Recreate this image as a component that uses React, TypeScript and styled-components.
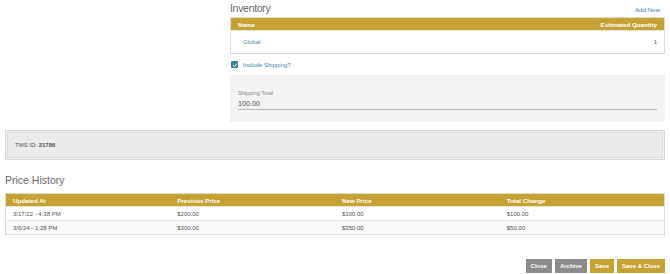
import styled, { createGlobalStyle } from "styled-components";

const GlobalStyle = createGlobalStyle`
  body {
    margin: 0;
    background: #ffffff;
    font-family: "Liberation Sans", Arial, sans-serif;
    color: #555;
  }
`;

const GOLD = "#c4a332";
const LINK = "#3f86b1";

const Page = styled.div`
  width: 670px;
  padding: 0 5px;
  box-sizing: border-box;
`;

const TopGrid = styled.div`
  display: grid;
  grid-template-columns: 225px 1fr;
`;

const InventoryColumn = styled.div`
  display: flex;
  flex-direction: column;
`;

const TitleBar = styled.div`
  display: flex;
  justify-content: space-between;
  align-items: flex-end;
  height: 17px;
  padding-bottom: 3px;
  box-sizing: border-box;
`;

const SectionTitle = styled.div`
  font-size: 10.5px;
  line-height: 12px;
  color: #6a6a6a;
  letter-spacing: -0.3px;
`;

const LinkText = styled.a`
  font-size: 6.2px;
  color: ${LINK};
  text-decoration: none;
  padding-right: 5px;
  line-height: 8px;
`;

const Table = styled.table`
  width: 100%;
  border-collapse: collapse;
  table-layout: fixed;
  border: 1px solid #dcdcdc;
`;

const Th = styled.th<{ $align?: string }>`
  background: ${GOLD};
  color: #fff;
  font-size: 6.2px;
  font-weight: bold;
  text-align: ${(p) => p.$align ?? "left"};
  height: 12px;
  padding: 0 7px;
`;

const Td = styled.td<{ $align?: string; $height?: number }>`
  font-size: 6px;
  color: #555;
  text-align: ${(p) => p.$align ?? "left"};
  height: ${(p) => p.$height ?? 13}px;
  padding: 0 7px;
  border-top: 1px solid #e6e6e6;
`;

const Row = styled.tr<{ $striped?: boolean }>`
  background: ${(p) => (p.$striped ? "#f9f9f9" : "#ffffff")};
`;

const LinkCell = styled(Td)`
  color: ${LINK};
  padding-left: 12px;
`;

const CheckRow = styled.label`
  display: flex;
  align-items: center;
  gap: 5px;
  height: 21px;
  padding-left: 1px;
  font-size: 6px;
  color: ${LINK};
`;

const CheckBox = styled.span`
  width: 7px;
  height: 7px;
  background: #3b7fa2;
  border-radius: 1px;
  display: flex;
  align-items: center;
  justify-content: center;
`;

const ShippingPanel = styled.div`
  background: #f3f3f3;
  padding: 14px 8px 12px;
  display: flex;
  flex-direction: column;
`;

const FieldLabel = styled.div`
  font-size: 5.6px;
  line-height: 8px;
  color: #888;
`;

const FieldValue = styled.div`
  font-size: 7.2px;
  line-height: 10px;
  margin-top: 2px;
  color: #555;
  border-bottom: 1px solid #b8b8b8;
`;

const InfoBox = styled.div`
  margin-top: 8px;
  height: 30px;
  box-sizing: border-box;
  background: #ebebeb;
  border: 1px solid #d8d8d8;
  box-shadow: inset 0 0 0 1px #f4f4f4, inset 0 0 0 2px #dedede;
  display: flex;
  align-items: center;
  padding-left: 9px;
  font-size: 6px;
  color: #555;
`;

const HistoryTitle = styled(SectionTitle)`
  margin: 12px 0 4px;
  line-height: 17px;
  letter-spacing: 0;
`;

const ButtonBar = styled.div`
  display: flex;
  justify-content: flex-end;
  gap: 3px;
  margin-top: 24px;
`;

const Button = styled.button<{ $primary?: boolean }>`
  height: 14px;
  border: none;
  padding: 0 5px;
  background: ${(p) => (p.$primary ? GOLD : "#8c8c8c")};
  color: #fff;
  font-family: "Liberation Sans", Arial, sans-serif;
  font-size: 6px;
  font-weight: bold;
`;

const history = [
  { at: "3/17/22 - 4:38 PM", prev: "$200.00", next: "$300.00", change: "$100.00" },
  { at: "3/6/24 - 1:28 PM", prev: "$300.00", next: "$350.00", change: "$50.00" },
];

export default function App() {
  return (
    <Page>
      <GlobalStyle />
      <TopGrid>
        <div />
        <InventoryColumn>
          <TitleBar>
            <SectionTitle>Inventory</SectionTitle>
            <LinkText href="#">Add New</LinkText>
          </TitleBar>
          <Table>
            <thead>
              <tr>
                <Th>Name</Th>
                <Th $align="right">Estimated Quantity</Th>
              </tr>
            </thead>
            <tbody>
              <Row>
                <LinkCell $height={22}>Global</LinkCell>
                <Td $align="right" $height={22}>1</Td>
              </Row>
            </tbody>
          </Table>
          <CheckRow>
            <CheckBox>
              <svg width="6" height="6" viewBox="0 0 10 10">
                <path d="M2 5.2 L4.2 7.3 L8.2 2.8" fill="none" stroke="#fff" strokeWidth="1.6" />
              </svg>
            </CheckBox>
            Include Shipping?
          </CheckRow>
          <ShippingPanel>
            <FieldLabel>Shipping Total</FieldLabel>
            <FieldValue>100.00</FieldValue>
          </ShippingPanel>
        </InventoryColumn>
      </TopGrid>

      <InfoBox>
        TMS ID:&nbsp;<b>21786</b>
      </InfoBox>

      <HistoryTitle>Price History</HistoryTitle>
      <Table>
        <thead>
          <tr>
            <Th>Updated At</Th>
            <Th>Previous Price</Th>
            <Th>New Price</Th>
            <Th>Total Change</Th>
          </tr>
        </thead>
        <tbody>
          {history.map((h, i) => (
            <Row key={h.at} $striped={i % 2 === 1}>
              <Td>{h.at}</Td>
              <Td>{h.prev}</Td>
              <Td>{h.next}</Td>
              <Td>{h.change}</Td>
            </Row>
          ))}
        </tbody>
      </Table>

      <ButtonBar>
        <Button>Close</Button>
        <Button>Archive</Button>
        <Button $primary>Save</Button>
        <Button $primary>Save &amp; Close</Button>
      </ButtonBar>
    </Page>
  );
}
